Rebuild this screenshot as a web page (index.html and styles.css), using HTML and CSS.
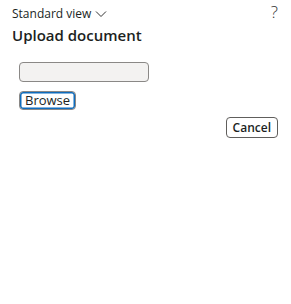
FILE: index.html
```html
<!DOCTYPE html>
<html lang="en">
  <head>
    <meta charset="UTF-8" />
    <meta name="viewport" content="width=device-width, initial-scale=1.0" />
    <title>Upload document</title>
    <link rel="stylesheet" href="styles.css">
  </head>
  <body>
    <div class="dialog">
      <div class="top-bar">
        <button class="view-switch" type="button">
          Standard view
          <svg width="12" height="8" viewBox="0 0 12 8"><path d="M1 1.5 L6 6.5 L11 1.5" fill="none" stroke="#333" stroke-width="1"/></svg>
        </button>
        <span class="help">?</span>
      </div>
      <h2 class="title">Upload document</h2>
      <div class="upload-area">
        <div class="file-name"></div>
        <button class="browse-button" type="button">Browse</button>
      </div>
      <div class="actions">
        <button class="cancel-button" type="button">Cancel</button>
      </div>
    </div>
  </body>
</html>
```

FILE: styles.css
```css
body {
  font-family: "Open Sans", "Noto Sans", Arial, sans-serif;
  margin: 0;
  background-color: #fff;
  color: #201f1e;
}
.dialog {
  padding: 3px 13px 0 12px;
}
.top-bar {
  display: flex;
  justify-content: space-between;
  align-items: flex-start;
  height: 21px;
}
.view-switch {
  font-family: inherit;
  font-size: 12px;
  color: #201f1e;
  background: none;
  border: none;
  padding: 0;
  margin-top: 2px;
  display: flex;
  align-items: center;
  gap: 4px;
}
.help {
  font-size: 17px;
  font-weight: 300;
  color: #333;
  line-height: 18px;
}
.title {
  font-size: 15px;
  font-weight: 600;
  margin: 0;
  line-height: 22px;
}
.upload-area {
  padding: 16px 0 0 7px;
  display: flex;
  flex-direction: column;
  align-items: flex-start;
  gap: 9px;
}
.file-name {
  width: 128px;
  height: 18px;
  background-color: #f3f2f1;
  border: 1px solid #8a8886;
  border-radius: 4px;
}
.browse-button {
  font-family: inherit;
  font-size: 13px;
  color: #201f1e;
  background-color: #fff;
  border: 1px solid #8a8886;
  border-radius: 4px;
  padding: 0 5px;
  height: 19px;
  line-height: 15px;
  box-shadow: inset 0 0 0 1.5px #0f6cbd;
  outline: none;
}
.actions {
  display: flex;
  justify-content: flex-end;
  margin-top: 7px;
}
.cancel-button {
  font-family: inherit;
  font-size: 12px;
  font-weight: 600;
  color: #201f1e;
  background-color: #fff;
  border: 1px solid #605e5c;
  border-radius: 4px;
  padding: 0 6px;
  height: 21px;
}
```
